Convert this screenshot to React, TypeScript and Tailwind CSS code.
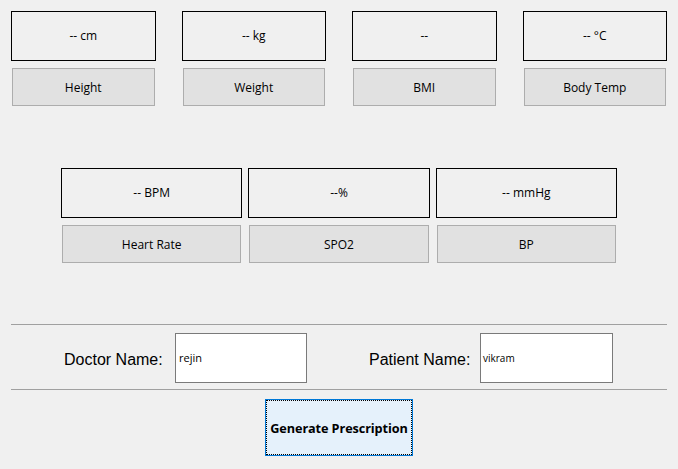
import React from 'react';

const topVitals = [
  { value: '-- cm', label: 'Height' },
  { value: '-- kg', label: 'Weight' },
  { value: '--', label: 'BMI' },
  { value: '-- °C', label: 'Body Temp' },
];

const bottomVitals = [
  { value: '-- BPM', label: 'Heart Rate' },
  { value: '--%', label: 'SPO2' },
  { value: '-- mmHg', label: 'BP' },
];

function VitalCell({ value, label }: { value: string; label: string }) {
  return (
    <div className="flex flex-col">
      <div className="flex h-[50px] items-center justify-center border border-black text-[12px] text-black">
        {value}
      </div>
      <button
        type="button"
        className="mx-px mt-[7px] flex h-[38px] items-center justify-center border border-[#adadad] bg-[#e1e1e1] pt-px text-[12px] text-black"
      >
        {label}
      </button>
    </div>
  );
}

export default function App() {
  return (
    <div
      className="h-[469px] w-[678px] overflow-hidden bg-[#f0f0f0] pt-[11px]"
      style={{ fontFamily: '"Open Sans", "Noto Sans", sans-serif' }}
    >
      {/* first row of vitals */}
      <div className="grid grid-cols-4 gap-x-[26px] px-[11px]">
        {topVitals.map(v => (
          <VitalCell key={v.label} value={v.value} label={v.label} />
        ))}
      </div>

      {/* second row */}
      <div className="mt-[62px] flex justify-center">
        <div className="grid w-[556px] grid-cols-3 gap-x-[6px]">
          {bottomVitals.map(v => (
            <VitalCell key={v.label} value={v.value} label={v.label} />
          ))}
        </div>
      </div>

      <div className="mx-[11px] mt-[61px] border-t border-[#a0a0a0]" />

      <div className="mt-[8px] flex items-center pl-[64px]">
        <span className="w-[99px] flex-none whitespace-nowrap pt-[3px] text-[16px] leading-none text-black font-['Liberation_Sans',sans-serif]">
          Doctor Name:
        </span>
        <div className="ml-[12px] flex h-[50px] w-[132px] flex-none items-center border border-[#7a7a7a] bg-white pl-[3px] text-[11px] text-black">
          rejin
        </div>
        <span className="ml-[62px] w-[99px] flex-none whitespace-nowrap pt-[3px] text-[16px] leading-none text-black font-['Liberation_Sans',sans-serif]">
          Patient Name:
        </span>
        <div className="ml-[12px] flex h-[50px] w-[133px] flex-none items-center border border-[#7a7a7a] bg-white pl-[2px] text-[10px] text-black">
          vikram
        </div>
      </div>

      <div className="mx-[11px] mt-[6px] border-t border-[#a0a0a0]" />

      <div className="mt-[9px] flex justify-center">
        <button
          type="button"
          className="flex h-[57px] w-[148px] items-center justify-center whitespace-nowrap border border-[#0078d7] bg-[#e5f1fb] pt-[2px] text-[12.7px] font-bold tracking-[-0.1px] text-black outline-1 -outline-offset-2 outline-black outline-dotted"
        >
          Generate Prescription
        </button>
      </div>
    </div>
  );
}
